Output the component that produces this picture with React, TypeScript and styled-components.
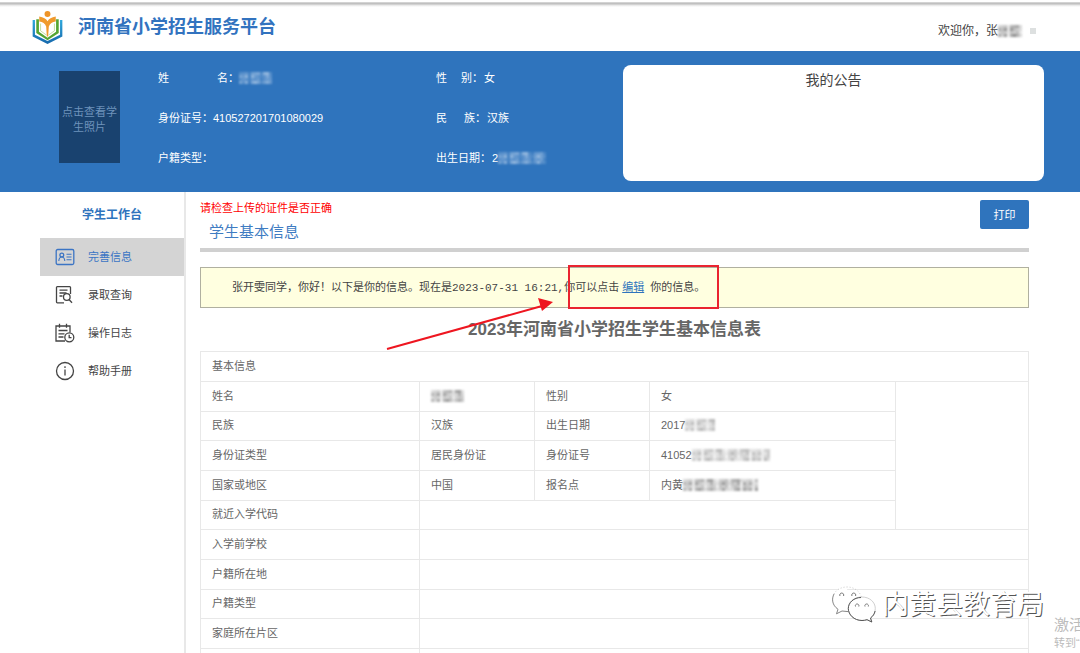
import React from 'react';
import styled, { createGlobalStyle } from 'styled-components';

const blue = '#2f74bd';

const GlobalStyle = createGlobalStyle`
  * { box-sizing: border-box; }
  body {
    margin: 0;
    background: #fff;
    color: #666;
    font-family: "Liberation Sans", "Noto Sans CJK SC", sans-serif;
    font-size: 11px;
    line-height: 16px;
  }
`;

const Page = styled.div`
  position: relative;
  display: flex;
  flex-direction: column;
  height: 100vh;
  overflow: hidden;
`;

const TopShade = styled.div`
  flex: none;
  height: 7px;
  background: linear-gradient(#fff 2px, #e6e6e6 2px, #c0c0c0 3px, #c0c0c0 4px, #e4e4e4 5px, #fff 7px);
`;

const Header = styled.header`
  display: flex;
  flex: none;
  align-items: center;
  height: 44px;
  padding: 0 44px 4px 32px;
`;

const SiteTitle = styled.h1`
  margin: 0 auto 0 15px;
  color: #3273bf;
  font-size: 18px;
  line-height: 24px;
`;

const Welcome = styled.div`
  display: flex;
  align-items: center;
  margin-top: 8px;
  color: #444;
  font-size: 12px;
`;

const Caret = styled.span`
  width: 6px;
  height: 6px;
  margin-left: 8px;
  background: #dde0e0;
`;

const Profile = styled.section`
  display: flex;
  flex: none;
  height: 141px;
  padding: 7px 36px 0 59px;
  background: ${blue};
  color: #fff;
`;

const PhotoButton = styled.button`
  flex: none;
  width: 61px;
  height: 92px;
  margin: 13px 38px 0 0;
  padding: 6px 0 0;
  border: 0;
  background: #19426f;
  color: #6f93bb;
  font: inherit;
  line-height: 15px;
`;

const Fields = styled.dl<{ $width: number; $valueGap?: number }>`
  flex: none;
  width: ${(p) => p.$width}px;
  margin: 0;
  dd { margin-left: ${(p) => p.$valueGap ?? 0}px; }
`;

const Field = styled.div`
  display: flex;
  align-items: center;
  height: 40px;
`;

const FieldLabel = styled.dt<{ $gap?: number }>`
  display: flex;
  gap: ${(p) => p.$gap ?? 0}px;
`;

const FieldValue = styled.dd`
  display: flex;
  align-items: center;
`;

const Announcements = styled.section`
  flex: 1;
  height: 116px;
  margin: 7px 0 0;
  border-radius: 8px;
  background: #fff;
`;

const AnnouncementsTitle = styled.h2`
  margin: 4px 0 0;
  color: #444;
  font-size: 14px;
  font-weight: 400;
  line-height: 22px;
  text-align: center;
`;

const Body = styled.div`
  display: flex;
  flex: 1;
  min-height: 0;
`;

const Sidebar = styled.nav`
  flex: none;
  width: 186px;
  padding-left: 40px;
  border-right: 2px solid #e8e8e8;
`;

const SidebarTitle = styled.h2`
  margin: 0;
  padding-left: 42px;
  color: ${blue};
  font-size: 12px;
  line-height: 46px;
`;

const NavLink = styled.a<{ $active?: boolean }>`
  display: flex;
  align-items: center;
  gap: 13px;
  height: 38px;
  padding-left: 15px;
  background: ${(p) => (p.$active ? '#d4d4d4' : 'transparent')};
  color: ${(p) => (p.$active ? '#3b74c4' : '#444')};
  text-decoration: none;
`;

const Main = styled.main`
  flex: 1;
  padding: 8px 51px 0 14px;
`;

const MainHead = styled.div`
  display: flex;
  justify-content: space-between;
  align-items: flex-start;
  height: 52px;
  border-bottom: 4px solid #d0d0d0;
`;

const Warning = styled.p`
  margin: 0;
  color: #f00;
`;

const SectionTitle = styled.h2`
  margin: 0;
  padding-left: 9px;
  color: #3f7cc2;
  font-size: 15px;
  font-weight: 400;
  line-height: 32px;
`;

const PrintButton = styled.button`
  width: 49px;
  height: 29px;
  border: 0;
  border-radius: 2px;
  background: ${blue};
  color: #fff;
  font: inherit;
`;

const Notice = styled.div`
  position: relative;
  margin-top: 15px;
  padding: 0 31px;
  border: 1px solid #b0b0a0;
  background: #ffffe0;
  color: #444;
  line-height: 38px;
  white-space: nowrap;
`;

const Timestamp = styled.time`
  font-family: "Liberation Mono", monospace;
`;

const EditLink = styled.a`
  margin: 0 3px;
  color: #2f74bd;
  text-decoration: underline;
`;

const Highlight = styled.div`
  position: absolute;
  top: -3px;
  left: 367px;
  width: 151px;
  height: 44px;
  border: 2px solid #ea2430;
`;

const Arrow = styled.svg`
  position: absolute;
  top: 29px;
  left: 183px;
`;

const TableTitle = styled.h3`
  margin: 0;
  font-size: 17px;
  line-height: 43px;
  text-align: center;
`;

const InfoTable = styled.table`
  width: 100%;
  border-collapse: collapse;
  table-layout: fixed;
  tr { height: 30px; }
  tr:nth-child(3n) { height: 29px; }
  th, td {
    padding: 0 11px 2px;
    border: 1px solid #e8e8e8;
    font-weight: 400;
    text-align: left;
  }
`;

const Masked = styled.span`
  display: flex;
  align-items: center;
`;

const MosaicArt = styled.svg`
  flex: none;
  filter: blur(1px);
`;

const Watermark = styled.div`
  position: absolute;
  right: 36px;
  bottom: 28px;
  display: flex;
  align-items: center;
  gap: 6px;
  color: #fff;
  font-size: 27px;
  line-height: 40px;
  text-shadow: 1px 1px 0 #555;
`;

const Activation = styled.div`
  position: absolute;
  right: -4px;
  bottom: 2px;
  width: 30px;
  color: #bbb;
  white-space: nowrap;
`;

const ActivationTitle = styled.div`
  font-size: 15px;
  line-height: 20px;
`;

function Mosaic({ width, color }: { width: number; color: string }) {
  const cells = [];
  for (let x = 0; x < width; x += 3) {
    for (let y = 0; y < 12; y += 3) {
      const level = ((x * 7 + y * 5 + ((x * y) % 11) * 3) % 10) / 10;
      const fade = x % 12 === 9 ? 0.4 : 1;
      cells.push(
        <rect key={`${x}-${y}`} x={x} y={y} width={3} height={3} opacity={(0.3 + level * 0.6) * fade} />,
      );
    }
  }
  return <MosaicArt width={width} height={12} fill={color} aria-hidden="true">{cells}</MosaicArt>;
}

function Logo() {
  return (
    <svg width="31" height="33" viewBox="96 30 92 100" aria-hidden="true">
      <defs>
        <linearGradient id="cover" x1="0" y1="0" x2="0" y2="1">
          <stop offset="0" stopColor="#2fa8dc" />
          <stop offset="1" stopColor="#1668ac" />
        </linearGradient>
      </defs>
      <path d="M97 57h7v45l38 19 38-19V57h7v50l-45 23-45-23z" fill="url(#cover)" />
      <path d="M108 55h8v38l26 18 26-18V55h8v42l-34 22-34-22z" fill="#55a532" />
      <path d="M121 68v22l18 13M163 68v22l-18 13" fill="none" stroke="#a9d070" strokeWidth="2" />
      <circle cx="142" cy="39" r="9" fill="#ee9428" />
      <path d="M117 47q19 3 25 14 6-11 25-14v15q-16 2-21 15l-2 30h-4l-2-30q-5-13-21-15z" fill="#f09a2c" />
    </svg>
  );
}

const iconProps = { width: 20, height: 20, viewBox: '0 0 20 20', fill: 'none', stroke: 'currentColor', strokeWidth: 1.3 };

const CardIcon = () => (
  <svg {...iconProps} aria-hidden="true">
    <rect x="1.2" y="2.5" width="17.6" height="15" rx="1.5" />
    <circle cx="6.8" cy="8" r="1.9" />
    <path d="M3.8 14c.2-2.5 1.2-4 3-4s2.8 1.5 3 4M11.5 7.200h5M11.5 10h5M11.5 12.800h5" strokeWidth="1.1" />
  </svg>
);

const SearchDocIcon = () => (
  <svg {...iconProps} aria-hidden="true">
    <path d="M15.500 9V2.500q0-.8-.8-.8H2.300q-.8 0-.8.8v14.500q0 .8.8.8H9M4.500 5.200h8M4.500 8h7M4.500 11h3" />
    <circle cx="11.8" cy="12" r="3.3" />
    <path d="M14 14.500l3 3.200" />
  </svg>
);

const LogIcon = () => (
  <svg {...iconProps} aria-hidden="true">
    <path d="M15 9.500V3H1v15h9M4.500.8v4M11.500.8v4M3.500 7.500h9M3.500 10.800h6M3.500 14h5" />
    <circle cx="14.3" cy="14.3" r="4.5" />
    <path d="M14.200 11.800v2.900h2.300" />
  </svg>
);

const InfoIcon = () => (
  <svg {...iconProps} aria-hidden="true">
    <circle cx="10" cy="10" r="8.5" />
    <path d="M10 8.500v6" />
    <path d="M10 5.300v1.600" />
  </svg>
);

function ChatLogo() {
  return (
    <svg width="45" height="38" viewBox="0 0 45 38" fill="#fff" aria-hidden="true">
      <path d="M16 1C8 1 1.500 6.500 1.500 13.500c0 4 2.300 7.500 5.500 9.800l-1.500 4.500 5.500-2.800c2 .6 4 .8 6.500.6" />
      <path d="M3 8C.5 13 1 19 7 23.300l-1.500 4.500 5.500-2.800 6 .6" stroke="#777" fill="none" strokeWidth="0.9" />
      <path d="M3 8C5 4 10 1 16 1c7.500 0 13 4.500 14.500 10.500" stroke="#bbb" strokeDasharray="1 2" fill="none" strokeWidth="0.8" />
      <path d="M31 11c-8 0-13.700 5-13.700 11.500S23 34.500 31 34.500c1.800 0 3.400-.3 5-.8l4.800 2.300-1.300-4c3-2.200 4.800-5.500 4.800-9.500 0-6.500-5.800-11.500-13.300-11.500z" stroke="#c4c4c4" strokeWidth="0.8" />
      <path d="M30 11.500c-7 0-12.700 5-12.700 11S23 34.500 31 34.500c1.800 0 3.400-.3 5-.8l4.800 2.300-1.300-4c2.500-1.800 4-4 4.600-7" stroke="#555" fill="none" />
      <g fill="none" stroke="#777">
        <path d="M9 10a2 2 0 1 1 3.500 0M21 10a2 2 0 1 1 3.500 0M24.500 20.500a1.800 1.800 0 1 1 3.300 0M34 20.500a1.800 1.800 0 1 1 3.300 0" />
      </g>
    </svg>
  );
}

const navItems = [
  { label: '完善信息', Icon: CardIcon, active: true },
  { label: '录取查询', Icon: SearchDocIcon },
  { label: '操作日志', Icon: LogIcon },
  { label: '帮助手册', Icon: InfoIcon },
];

const grey = '#8a8a8a';

const pairRows: [string, React.ReactNode, string, React.ReactNode][] = [
  ['姓名', <Masked><Mosaic width={33} color={grey} /></Masked>, '性别', '女'],
  ['民族', '汉族', '出生日期', <Masked>2017<Mosaic width={30} color="#aaa" /></Masked>],
  ['身份证类型', '居民身份证', '身份证号', <Masked>41052<Mosaic width={78} color="#aaa" /></Masked>],
  ['国家或地区', '中国', '报名点', <Masked>内黄<Mosaic width={75} color={grey} /></Masked>],
];

const wideRows = ['入学前学校', '户籍所在地', '户籍类型', '家庭所在片区', ''];

export default function App() {
  return (
    <Page>
      <GlobalStyle />
      <TopShade />
      <Header>
        <Logo />
        <SiteTitle>河南省小学招生服务平台</SiteTitle>
        <Welcome>
          欢迎你，张<Mosaic width={24} color="#777" />
          <Caret />
        </Welcome>
      </Header>

      <Profile>
        <PhotoButton type="button">点击查看学<br />生照片</PhotoButton>
        <Fields $width={278}>
          <Field>
            <FieldLabel $gap={48}><span>姓</span><span>名：</span></FieldLabel>
            <FieldValue><Mosaic width={33} color="#a9c6e6" /></FieldValue>
          </Field>
          <Field>
            <FieldLabel>身份证号：</FieldLabel>
            <FieldValue>410527201701080029</FieldValue>
          </Field>
          <Field>
            <FieldLabel>户籍类型：</FieldLabel>
          </Field>
        </Fields>
        <Fields $width={187} $valueGap={1}>
          <Field>
            <FieldLabel $gap={14}><span>性</span><span>别：</span></FieldLabel>
            <FieldValue>女</FieldValue>
          </Field>
          <Field>
            <FieldLabel $gap={17}><span>民</span><span>族：</span></FieldLabel>
            <FieldValue>汉族</FieldValue>
          </Field>
          <Field>
            <FieldLabel>出生日期：</FieldLabel>
            <FieldValue>2<Mosaic width={48} color="#a9c6e6" /></FieldValue>
          </Field>
        </Fields>
        <Announcements>
          <AnnouncementsTitle>我的公告</AnnouncementsTitle>
        </Announcements>
      </Profile>

      <Body>
        <Sidebar>
          <SidebarTitle>学生工作台</SidebarTitle>
          {navItems.map(({ label, Icon, active }) => (
            <NavLink key={label} href="#" $active={active}>
              <Icon />
              {label}
            </NavLink>
          ))}
        </Sidebar>

        <Main>
          <MainHead>
            <div>
              <Warning>请检查上传的证件是否正确</Warning>
              <SectionTitle>学生基本信息</SectionTitle>
            </div>
            <PrintButton type="button">打印</PrintButton>
          </MainHead>

          <Notice>
            张开雯同学，你好！以下是你的信息。现在是<Timestamp>2023-07-31 16:21,</Timestamp>你可以点击
            <EditLink href="#">编辑</EditLink> 你的信息。
            <Highlight />
            <Arrow width="172" height="56" viewBox="0 0 172 56" aria-hidden="true">
              <path d="M3 52L158 9" stroke="#ee1620" strokeWidth="2" />
              <path d="M154 1l15 4-11 9z" fill="#ee1620" />
            </Arrow>
          </Notice>

          <TableTitle>2023年河南省小学招生学生基本信息表</TableTitle>
          <InfoTable>
            <colgroup>
              <col width="219" />
              <col width="115" />
              <col width="115" />
              <col />
              <col width="133" />
            </colgroup>
            <tbody>
              <tr><th colSpan={5}>基本信息</th></tr>
              {pairRows.map(([a, b, c, d], i) => (
                <tr key={a}>
                  <th>{a}</th>
                  <td>{b}</td>
                  <th>{c}</th>
                  <td>{d}</td>
                  {i === 0 && <td rowSpan={5} />}
                </tr>
              ))}
              <tr><th>就近入学代码</th><td colSpan={3} /></tr>
              {wideRows.map((label) => (
                <tr key={label}><th>{label}</th><td colSpan={4} /></tr>
              ))}
            </tbody>
          </InfoTable>
        </Main>
      </Body>

      <Watermark>
        <ChatLogo />
        内黄县教育局
      </Watermark>
      <Activation>
        <ActivationTitle>激活</ActivationTitle>
        转到“
      </Activation>
    </Page>
  );
}
